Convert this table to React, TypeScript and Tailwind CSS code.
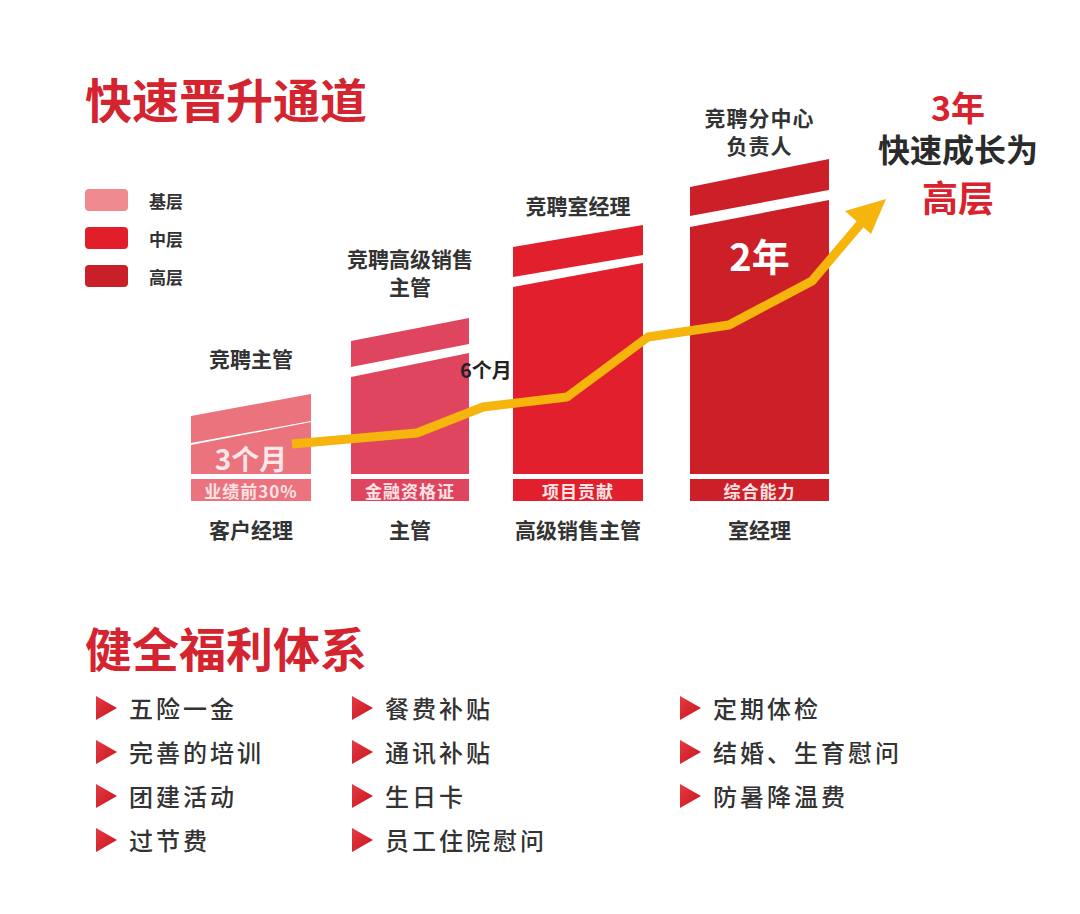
import React from "react";

const Triangle = () => (
  <svg width="21" height="24" viewBox="0 0 21 24" className="shrink-0">
    <defs>
      <linearGradient id="tri" x1="0" y1="0" x2="1" y2="1">
        <stop offset="0" stopColor="#e63a42" />
        <stop offset="1" stopColor="#c8141f" />
      </linearGradient>
    </defs>
    <polygon points="0,0 21,12 0,24" fill="url(#tri)" />
  </svg>
);

const benefits: string[][] = [
  ["五险一金", "完善的培训", "团建活动", "过节费"],
  ["餐费补贴", "通讯补贴", "生日卡", "员工住院慰问"],
  ["定期体检", "结婚、生育慰问", "防暑降温费"],
];

export default function App() {
  return (
    <div className="relative w-[1080px] h-[914px] overflow-hidden bg-white pl-[85px] pt-[74px] font-['Noto_Sans_CJK_SC','Noto_Sans',sans-serif]">
      {/* Chart row */}
      <div className="flex h-[466px] items-end">
        {/* title + legend */}
        <div className="flex w-[106px] shrink-0 flex-col self-start">
          <div className="whitespace-nowrap text-[47px] font-bold leading-none text-[#d3242f]">
            快速晋升通道
          </div>
          <div className="mt-[68px] flex flex-col gap-[16px]">
            <div className="flex items-center">
              <div className="h-[22px] w-[43px] rounded-[4px] bg-[#ef8a91]" />
              <span className="ml-[21px] whitespace-nowrap text-[17px] font-bold leading-none text-[#333]">基层</span>
            </div>
            <div className="flex items-center">
              <div className="h-[22px] w-[43px] rounded-[4px] bg-[#e31e2b]" />
              <span className="ml-[21px] whitespace-nowrap text-[17px] font-bold leading-none text-[#333]">中层</span>
            </div>
            <div className="flex items-center">
              <div className="h-[22px] w-[43px] rounded-[4px] bg-[#c91f29]" />
              <span className="ml-[21px] whitespace-nowrap text-[17px] font-bold leading-none text-[#333]">高层</span>
            </div>
          </div>
        </div>

        {/* Bar 1 */}
        <div className="flex w-[120px] shrink-0 flex-col items-center">
          <div className="mb-[25px] whitespace-nowrap text-[21px] font-bold leading-none text-[#333]">竞聘主管</div>
          <div className="h-[49px] w-full bg-[#ea737d] [clip-path:polygon(0_22px,100%_0,100%_27px,0_49px)]" />
          <div className="-mt-[21px] flex h-[52px] w-full items-end justify-center bg-[#ea737d] pb-[2px] [clip-path:polygon(0_23px,100%_0,100%_100%,0_100%)]">
            <span className="whitespace-nowrap text-[28px] font-bold leading-none text-[#fde7e9]">3个月</span>
          </div>
          <div className="mt-[5px] flex h-[22px] w-full items-center justify-center bg-[#ea737d] text-[17px] font-bold leading-none tracking-[1px] text-[#fde3e6]">
            业绩前30%
          </div>
          <div className="mt-[18px] whitespace-nowrap text-[21px] font-bold leading-none text-[#333]">客户经理</div>
        </div>

        {/* Bar 2 */}
        <div className="ml-[40px] flex w-[118px] shrink-0 flex-col items-center">
          <div className="mb-[18px] whitespace-nowrap text-center text-[21px] font-bold leading-[28px] text-[#333]">
            竞聘高级销售
            <br />
            主管
          </div>
          <div className="h-[49px] w-full bg-[#e0455f] [clip-path:polygon(0_23px,100%_0,100%_26px,0_49px)]" />
          <div className="-mt-[14px] h-[121px] w-full bg-[#e0455f] [clip-path:polygon(0_24px,100%_0,100%_100%,0_100%)]" />
          <div className="mt-[5px] flex h-[22px] w-full items-center justify-center bg-[#e0455f] text-[17px] font-bold leading-none tracking-[1px] text-[#fde3e6]">
            金融资格证
          </div>
          <div className="mt-[18px] whitespace-nowrap text-[21px] font-bold leading-none text-[#333]">主管</div>
        </div>

        {/* Bar 3 */}
        <div className="ml-[44px] flex w-[130px] shrink-0 flex-col items-center">
          <div className="mb-[9px] whitespace-nowrap text-[21px] font-bold leading-none text-[#333]">竞聘室经理</div>
          <div className="h-[52px] w-full bg-[#e21f2c] [clip-path:polygon(0_22px,100%_0,100%_30px,0_52px)]" />
          <div className="-mt-[14px] h-[211px] w-full bg-[#e21f2c] [clip-path:polygon(0_24px,100%_0,100%_100%,0_100%)]" />
          <div className="mt-[5px] flex h-[22px] w-full items-center justify-center bg-[#e21f2c] text-[17px] font-bold leading-none tracking-[1px] text-[#fde3e6]">
            项目贡献
          </div>
          <div className="mt-[18px] whitespace-nowrap text-[21px] font-bold leading-none text-[#333]">高级销售主管</div>
        </div>

        {/* Bar 4 */}
        <div className="ml-[47px] flex w-[139px] shrink-0 flex-col items-center">
          <div className="mb-0 whitespace-nowrap text-center text-[21px] font-bold leading-[28px] tracking-[1px] text-[#333]">
            竞聘分中心
            <br />
            负责人
          </div>
          <div className="h-[57px] w-full bg-[#cd1f28] [clip-path:polygon(0_28px,100%_0,100%_31px,0_57px)]" />
          <div className="-mt-[16px] flex h-[274px] w-full justify-center bg-[#cd1f28] pt-[36px] [clip-path:polygon(0_27px,100%_0,100%_100%,0_100%)]">
            <span className="whitespace-nowrap text-[38px] font-bold leading-none text-white">2年</span>
          </div>
          <div className="mt-[5px] flex h-[22px] w-full items-center justify-center bg-[#cd1f28] text-[17px] font-bold leading-none tracking-[1px] text-[#fde3e6]">
            综合能力
          </div>
          <div className="mt-[18px] whitespace-nowrap text-[21px] font-bold leading-none text-[#333]">室经理</div>
        </div>

        {/* Right text */}
        <div className="ml-[48px] mt-[16px] flex w-[162px] shrink-0 flex-col items-center self-start">
          <div className="whitespace-nowrap text-[34px] font-bold leading-none text-[#d8232f]">3年</div>
          <div className="mt-[8px] whitespace-nowrap text-[32px] font-bold leading-none text-[#2b2b2b]">快速成长为</div>
          <div className="mt-[14px] whitespace-nowrap text-[36px] font-bold leading-none text-[#d8232f]">高层</div>
        </div>
      </div>

      {/* Benefits section */}
      <div className="mt-[83px] whitespace-nowrap text-[47px] font-bold leading-none text-[#d3242f]">健全福利体系</div>
      <div className="ml-[11px] mt-[16px] grid grid-cols-[256px_328px_1fr]">
        {benefits.map((col, ci) => (
          <div key={ci} className="flex flex-col">
            {col.map((t) => (
              <div key={t} className="flex h-[44px] items-center">
                <Triangle />
                <span className="ml-[12px] whitespace-nowrap text-[24px] font-medium leading-none tracking-[3px] text-[#333]">
                  {t}
                </span>
              </div>
            ))}
          </div>
        ))}
      </div>

      {/* Growth line overlay */}
      <svg
        className="pointer-events-none absolute left-0 top-0"
        width="1080"
        height="914"
        viewBox="0 0 1080 914"
      >
        <polyline
          points="292,444 417,433 483,407 567,397 648,337 729,325 812,281 862,222"
          fill="none"
          stroke="#f5b50c"
          strokeWidth="9"
          strokeLinejoin="round"
        />
        <polygon points="886,199 845,211 871,234" fill="#f5b50c" />
      </svg>

      {/* 6个月 annotation */}
      <div className="absolute left-[460px] top-[360px] whitespace-nowrap text-[20px] font-bold leading-none text-[#222]">
        6个月
      </div>
    </div>
  );
}
